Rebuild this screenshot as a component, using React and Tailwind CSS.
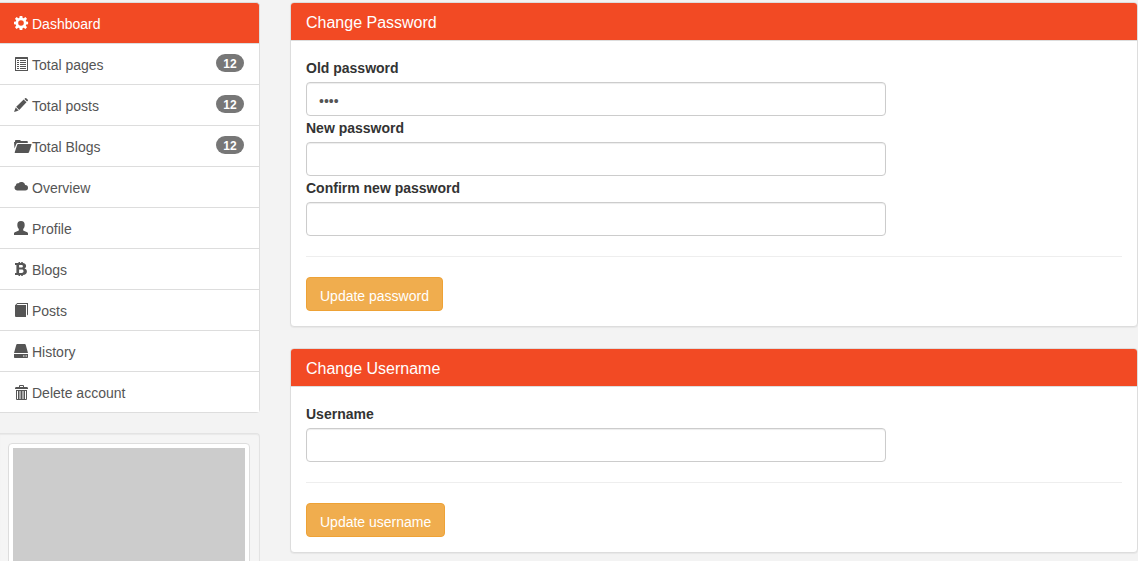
import React from "react";

const glyphs = {
  cog: (
    <path fillRule="evenodd" d="M5.700 0h2.600l.4 1.900 1 .4L11.400 1.100l1.600 1.600-1.200 1.700.4 1 1.900.4v2.400l-1.900.4-.4 1 1.200 1.700-1.600 1.600-1.700-1.200-1 .4-.4 1.900H5.700l-.4-1.900-1-.4-1.700 1.200L1 11.300l1.200-1.700-.4-1L0 8.200V5.800l1.800-.4.4-1L1 2.700l1.600-1.600 1.700 1.200 1-.4zM7 4.200a2.800 2.800 0 1 0 0 5.600 2.800 2.800 0 0 0 0-5.600z" />
  ),
  list: (
    <path fillRule="evenodd" d="M1.500 0h12q.5 0 .5.500v13q0 .5-.5.500h-12q-.5 0-.5-.5V.5q0-.5.500-.5zM2 2v11h11V2zM3 3h2v1H3zm3 0h6v1H6zM3 5h2v1H3zm3 0h6v1H6zM3 7h2v1H3zm3 0h6v1H6zM3 9h2v1H3zm3 0h6v1H6zM3 11h2v1H3zm3 0h6v1H6z" />
  ),
  pencil: (
    <path d="M10.400.9 11.100.3q.6-.6 1.200 0L13.800 1.800q.5.500 0 1l-.8.800zM9.700 1.500l2.800 2.800L5.200 11.900 2.200 8.800zM1.700 9.400 4.700 12.400 0 14z" />
  ),
  folder: (
    <path d="M0 3h1V2q0-.5.500-1H6l1 1h6q.8 0 .8.800V4H3.500q-.8 0-1.100.7L.5 9.500zM4.200 5H17q.8 0 .5.700l-2.500 7.500q-.3.800-1 .8H1.200q-.8 0-.5-.8L3.200 5.700Q3.500 5 4.200 5z" />
  ),
  cloud: (
    <path d="M3 10.500a2.800 2.800 0 0 1-1-5.300 2 2 0 0 1 2.500-2 3.900 3.900 0 0 1 6.700 1.800A2.700 2.700 0 1 1 11.300 10.500z" />
  ),
  user: (
    <path d="M7 0c2.600 0 3.700 1.600 3.700 3.900 0 1.900-.7 3.200-1.500 4.100v1.500l4 1.700q.8.400.8 1.300V14H0v-1.500q0-.9.800-1.300l4-1.700V8C4 7.100 3.300 5.800 3.300 3.900 3.300 1.600 4.400 0 7 0z" />
  ),
  bitcoin: (
    <path fillRule="evenodd" d="M1 1h3.500V0h1.600v1h1.100V0h1.600v1.100c2 .2 3.300 1.200 3.300 2.900 0 1.200-.6 2-1.600 2.500 1.600.4 2.400 1.500 2.400 3 0 2.100-1.500 3.300-4.100 3.500v1H7.200v-1H6.100v1H4.500v-1H1v-1.900h1.400V2.900H1zm4.100 2v2.600h2.300c.9 0 1.500-.5 1.500-1.300S8.300 3 7.400 3zm0 4.500V11h2.600c1.100 0 1.800-.6 1.800-1.700 0-1.200-.7-1.800-1.800-1.800z" />
  ),
  book: (
    <path d="M3.300 0H14v11.600l-1 1V1H3.500l-1 1H12v12H2q-1 0-1-1V2.300z" />
  ),
  hdd: (
    <path fillRule="evenodd" d="M3.200 0h7.600q.7 0 .9.700L14 9H0L2.300.7Q2.500 0 3.200 0zM0 10h14v3.300q0 .7-.7.700H.7q-.7 0-.7-.7zm9 1.500v1h1.500v-1zm2.500 0v1H13v-1z" />
  ),
  trash: (
    <path fillRule="evenodd" d="M5 1q0-1 1-1h3q1 0 1 1v1h3.200l.8 1v1H1V3l.8-1H5zm1 0v1h3V1zM2 5h11v9q0 1-1 1H3q-1 0-1-1zm1 1v8h1V6zm2.500 0v8h1V6zm3 0v8h1V6zM11 6v8h1V6z" />
  ),
};

const menu = [
  { label: "Dashboard", icon: "cog", active: true },
  { label: "Total pages", icon: "list", count: 12 },
  { label: "Total posts", icon: "pencil", count: 12 },
  { label: "Total Blogs", icon: "folder", count: 12 },
  { label: "Overview", icon: "cloud" },
  { label: "Profile", icon: "user" },
  { label: "Blogs", icon: "bitcoin" },
  { label: "Posts", icon: "book" },
  { label: "History", icon: "hdd" },
  { label: "Delete account", icon: "trash" },
];

function MenuItem({ label, icon, count, active }) {
  return (
    <li>
      <a
        href="#"
        className={
          active
            ? "flex items-start rounded-tr border-t border-r border-b border-[#ddd] bg-[#f24a24] pt-[10px] pr-[15px] pb-[9px] pl-[14px] text-white"
            : "flex items-start border-r border-b border-[#ddd] bg-white pt-[10px] pr-[15px] pb-[9px] pl-[14px] text-[#555]"
        }
      >
        <svg
          viewBox="0 0 18 15"
          className="mt-[3px] h-[15px] w-[18px] shrink-0 fill-current"
          aria-hidden="true"
        >
          {glyphs[icon]}
        </svg>
        <span className="grow pt-px">{label}</span>
        {count && (
          <span className="flex h-[18px] w-7 items-center justify-center rounded-[10px] bg-[#777] pt-[2px] text-xs font-bold text-white">
            {count}
          </span>
        )}
      </a>
    </li>
  );
}

function Field({ id, label, type, defaultValue, autoComplete }) {
  return (
    <div>
      <label htmlFor={id} className="block pt-[2px] pb-1 font-bold">
        {label}
      </label>
      <input
        id={id}
        type={type}
        defaultValue={defaultValue}
        autoComplete={autoComplete}
        className="block h-[34px] w-full max-w-[580px] rounded border border-[#ccc] bg-white px-3 pt-[3px] text-sm text-[#555] shadow-[inset_0_1px_1px_rgba(0,0,0,0.075)] outline-none focus:border-[#66afe9]"
      />
    </div>
  );
}

function Panel({ title, action, children }) {
  return (
    <section className="rounded border border-[#ddd] bg-white shadow-[0_1px_1px_rgba(0,0,0,0.05)]">
      <h3 className="rounded-t-[3px] border-b border-[#ddd] bg-[#f24a24] px-[15px] pt-[11px] pb-2 text-base leading-[18px] text-white">
        {title}
      </h3>
      <form className="p-[15px]" onSubmit={(e) => e.preventDefault()}>
        {children}
        <hr className="my-5 border-[#eee]" />
        <button
          type="submit"
          className="block h-[34px] rounded border border-[#eea236] bg-[#f0ad4e] px-[13px] pt-1 text-white hover:bg-[#ec971f]"
        >
          {action}
        </button>
      </form>
    </section>
  );
}

export default function App() {
  return (
    <div className="flex h-screen items-start gap-[30px] overflow-hidden bg-[#f3f3f3] pt-[2px] font-['Liberation_Sans',Arial,sans-serif] text-sm leading-5 text-[#333]">
      <aside className="w-[260px] shrink-0">
        <ul className="mb-5 overflow-hidden rounded-r">
          {menu.map((item) => (
            <MenuItem key={item.label} {...item} />
          ))}
        </ul>
        <div className="rounded-tr border-t border-r border-[#e3e3e3] bg-[#f5f5f5] py-[9px] pr-[9px] pl-2 shadow-[inset_0_1px_1px_rgba(0,0,0,0.05)]">
          <div className="rounded border border-[#ddd] bg-white p-1">
            <div className="aspect-square w-full bg-[#ccc]" />
          </div>
        </div>
      </aside>
      <main className="flex min-w-0 grow flex-col gap-[21px]">
        <Panel title="Change Password" action="Update password">
          <Field id="old-password" label="Old password" type="password" defaultValue="1234" autoComplete="current-password" />
          <Field id="new-password" label="New password" type="password" autoComplete="new-password" />
          <Field id="confirm-password" label="Confirm new password" type="password" autoComplete="new-password" />
        </Panel>
        <Panel title="Change Username" action="Update username">
          <Field id="username" label="Username" type="text" autoComplete="username" />
        </Panel>
      </main>
    </div>
  );
}
